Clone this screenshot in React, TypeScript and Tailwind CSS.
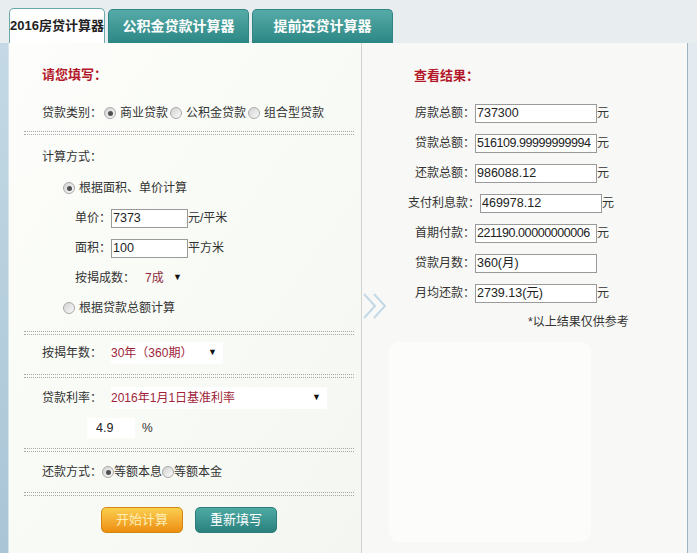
import React from "react";

const FONT = "font-['Liberation_Sans','Noto_Sans_CJK_SC',sans-serif]";

function Radio({ checked }: { checked?: boolean }) {
  return (
    <span className="inline-flex size-[12px] shrink-0 items-center justify-center rounded-full border border-[#a9a9a9] bg-gradient-to-br from-[#d2d2d2] to-[#fbfbfb]">
      {checked && <span className="size-[5px] rounded-full bg-[#505050]" />}
    </span>
  );
}

function Dotted({ className = "" }: { className?: string }) {
  return (
    <div
      className={`ml-[15px] mr-[7px] h-[4px] border-y border-dotted border-[#a8a8a8] ${className}`}
    />
  );
}

function TextBox({ value, w, tight }: { value: string; w: string; tight?: boolean }) {
  return (
    <span
      className={`flex h-[19px] items-center overflow-hidden whitespace-nowrap border border-[#9a9a9a] bg-white pl-[1px] text-[12.5px] text-[#222] ${w} ${tight ? "tracking-[-0.45px]" : ""}`}
    >
      {value}
    </span>
  );
}

function Caret() {
  return <span className="text-[9px] text-[#111]">▼</span>;
}

function ResultRow({
  label,
  value,
  indent,
  unit = true,
  tight,
}: {
  label: string;
  value: string;
  indent: string;
  unit?: boolean;
  tight?: boolean;
}) {
  return (
    <div className={`flex h-[30px] items-center ${indent}`}>
      <span>{label}</span>
      <TextBox value={value} w="w-[122px]" tight={tight} />
      {unit && <span>元</span>}
    </div>
  );
}

export default function App() {
  return (
    <div
      className={`${FONT} relative h-[553px] w-[697px] overflow-hidden bg-[#e8edf0] text-[12px] text-[#333]`}
    >
      {/* tabs */}
      <div className="flex h-[43px] items-end gap-[3px] pl-[9px]">
        <div className="relative z-10 flex h-[35px] w-[96px] items-center justify-center rounded-t-[5px] border border-b-0 border-[#6aa9a8] bg-white text-[13px] font-bold text-[#222]">
          2016房贷计算器
        </div>
        <div className="flex h-[34px] w-[141px] items-center justify-center rounded-t-[5px] border border-b-0 border-[#2f8582] bg-gradient-to-b from-[#55aba8] to-[#2b8784] text-[14px] font-bold text-white">
          公积金贷款计算器
        </div>
        <div className="flex h-[34px] w-[141px] items-center justify-center rounded-t-[5px] border border-b-0 border-[#2f8582] bg-gradient-to-b from-[#55aba8] to-[#2b8784] text-[14px] font-bold text-white">
          提前还贷计算器
        </div>
      </div>

      <div className="flex h-[510px]">
        <div className="w-[9px] border-r border-[#d5e3ea] bg-gradient-to-b from-[#c4d9e5] to-[#a9c5d6]" />

        {/* left form */}
        <div className="w-[353px] border-r border-[#cfd3cc] bg-gradient-to-br from-[#fdfefb] to-[#f4f7f1]">
          <div className="mt-[17px] flex h-[30px] items-center pl-[33px] text-[13px] font-bold text-[#b3182a]">
            请您填写：
          </div>
          <div className="mt-[8px] flex h-[30px] items-center gap-[2px] pl-[33px]">
            <span>贷款类别：</span>
            <Radio checked />
            <span className="ml-[2px]">商业贷款</span>
            <Radio />
            <span className="ml-[2px]">公积金贷款</span>
            <Radio />
            <span className="ml-[2px]">组合型贷款</span>
          </div>
          <Dotted className="mt-[3px]" />

          <div className="mt-[7px] flex h-[30px] items-center pl-[33px]">
            计算方式：
          </div>
          <div className="mt-[1px] flex h-[30px] items-center gap-[4px] pl-[54px]">
            <Radio checked />
            <span>根据面积、单价计算</span>
          </div>
          <div className="flex h-[30px] items-center pl-[66px]">
            <span>单价：</span>
            <TextBox value="7373" w="w-[77px]" />
            <span>元/平米</span>
          </div>
          <div className="flex h-[30px] items-center pl-[66px]">
            <span>面积：</span>
            <TextBox value="100" w="w-[77px]" />
            <span>平方米</span>
          </div>
          <div className="flex h-[30px] items-center pl-[66px]">
            <span>按揭成数：</span>
            <span className="ml-[10px] w-[28px] text-[#8e2a40]">7成</span>
            <Caret />
          </div>
          <div className="flex h-[30px] items-center gap-[4px] pl-[54px]">
            <Radio />
            <span>根据贷款总额计算</span>
          </div>
          <Dotted className="mt-[8px]" />

          <div className="mt-[3px] flex h-[30px] items-center pl-[33px]">
            <span>按揭年数：</span>
            <span className="ml-[9px] flex h-[22px] w-[112px] items-center justify-between bg-white pr-[6px] text-[#9e2337]">
              <span>30年（360期）</span>
              <Caret />
            </span>
          </div>
          <Dotted className="mt-[6px]" />

          <div className="mt-[5px] flex h-[30px] items-center pl-[33px]">
            <span>贷款利率：</span>
            <span className="ml-[9px] flex h-[22px] w-[216px] items-center justify-between bg-white pr-[6px] text-[#9e2337]">
              <span>2016年1月1日基准利率</span>
              <Caret />
            </span>
          </div>
          <div className="flex h-[30px] items-center pl-[78px]">
            <span className="flex h-[20px] w-[48px] items-center bg-white pl-[9px] text-[12.5px] text-[#222]">4.9</span>
            <span className="ml-[7px]">%</span>
          </div>
          <Dotted className="mt-[5px]" />

          <div className="mt-[5px] flex h-[30px] items-center pl-[33px]">
            <span>还款方式：</span>
            <Radio checked />
            <span>等额本息</span>
            <Radio />
            <span>等额本金</span>
          </div>
          <Dotted className="mt-[5px]" />

          <div className="mt-[11px] flex gap-[12px] pl-[92px]">
            <button className="h-[26px] w-[82px] rounded-[5px] border border-[#d4870e] bg-gradient-to-b from-[#fbcf4c] to-[#ec8e0c] text-[13px] text-[#fdeeb5]">
              开始计算
            </button>
            <button className="h-[26px] w-[82px] rounded-[5px] border border-[#2c7d7a] bg-gradient-to-b from-[#4eaaa4] to-[#2a817e] text-[13px] text-white">
              重新填写
            </button>
          </div>
        </div>

        {/* right results */}
        <div className="relative w-[326px] border-r border-[#9fb5c4] bg-[#f8f9f6]">
          <div className="mt-[18px] flex h-[30px] items-center pl-[52px] text-[13px] font-bold text-[#b3182a]">
            查看结果：
          </div>
          <div className="mt-[7px]">
            <ResultRow label="房款总额：" value="737300" indent="pl-[53px]" />
            <ResultRow label="贷款总额：" value="516109.99999999994" indent="pl-[53px]" tight />
            <ResultRow label="还款总额：" value="986088.12" indent="pl-[53px]" />
            <ResultRow label="支付利息款：" value="469978.12" indent="pl-[46px]" />
            <ResultRow label="首期付款：" value="221190.00000000006" indent="pl-[53px]" tight />
            <ResultRow label="贷款月数：" value="360(月)" indent="pl-[53px]" unit={false} />
            <ResultRow label="月均还款：" value="2739.13(元)" indent="pl-[53px]" />
          </div>
          <div className="mt-[2px] flex h-[24px] items-center pl-[166px]">
            *以上结果仅供参考
          </div>
          <div className="ml-[27px] mt-[8px] h-[200px] w-[202px] rounded-[10px] bg-[#fcfdfb]" />

          <svg
            className="absolute left-0 top-[248px]"
            width="28"
            height="30"
            viewBox="0 0 28 30"
            fill="none"
            stroke="#c3d8e6"
            strokeWidth="2"
          >
            <path d="M2 3 L13 15 L2 27" />
            <path d="M12 3 L23 15 L12 27" />
          </svg>
        </div>

        <div className="flex-1 bg-[#e4ebf0]" />
      </div>
    </div>
  );
}
